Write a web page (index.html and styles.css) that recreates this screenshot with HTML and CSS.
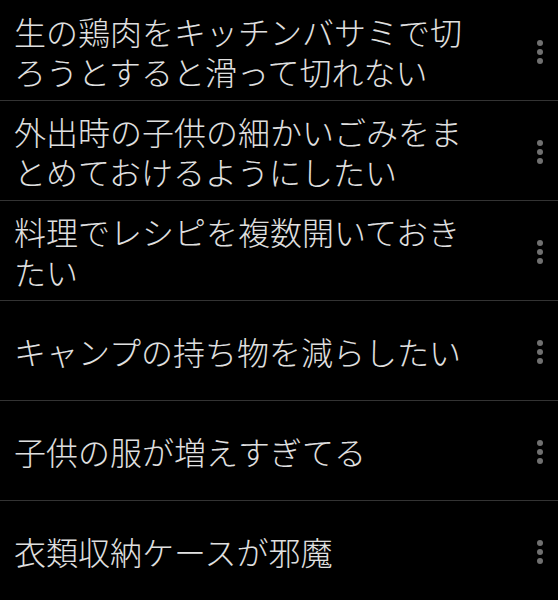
FILE: index.html
```html
<!DOCTYPE html>
<html lang="ja">
<head>
<meta charset="utf-8">
<link rel="stylesheet" href="styles.css">
</head>
<body>
<ul class="list">
  <li class="row"><span class="title">生の鶏肉をキッチンバサミで切ろうとすると滑って切れない</span><span class="more"><i></i><i></i><i></i></span></li>
  <li class="row"><span class="title">外出時の子供の細かいごみをまとめておけるようにしたい</span><span class="more"><i></i><i></i><i></i></span></li>
  <li class="row"><span class="title">料理でレシピを複数開いておきたい</span><span class="more"><i></i><i></i><i></i></span></li>
  <li class="row"><span class="title">キャンプの持ち物を減らしたい</span><span class="more"><i></i><i></i><i></i></span></li>
  <li class="row"><span class="title">子供の服が増えすぎてる</span><span class="more"><i></i><i></i><i></i></span></li>
  <li class="row"><span class="title">衣類収納ケースが邪魔</span><span class="more"><i></i><i></i><i></i></span></li>
</ul>
</body>
</html>
```
FILE: styles.css
```css
html, body {
  margin: 0;
  padding: 0;
  background: #000;
  height: 100%;
  overflow: hidden;
}
.list {
  list-style: none;
  margin: 0;
  padding: 1px 0 0 0;
}
.row {
  box-sizing: border-box;
  height: 100px;
  border-bottom: 1px solid #333;
  display: flex;
  align-items: center;
  padding-left: 14px;
}
.title {
  width: 470px;
  font-family: "Noto Sans CJK JP", "Noto Sans", sans-serif;
  font-weight: 300;
  font-size: 32px;
  line-height: 40px;
  color: #e0e0e0;
}
.more {
  margin-left: auto;
  width: 12px;
  margin-right: 12px;
  display: flex;
  flex-direction: column;
  align-items: center;
  gap: 3px;
  padding-top: 2px;
}
.more i {
  display: block;
  width: 6px;
  height: 6px;
  border-radius: 50%;
  background: #707070;
}
```
